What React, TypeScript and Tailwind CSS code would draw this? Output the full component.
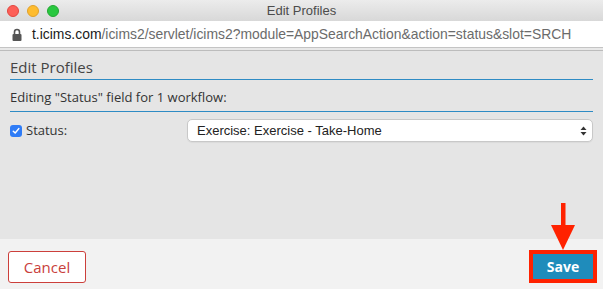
import React from "react";

export default function App() {
  return (
    <div className="relative flex h-[289px] w-[603px] flex-col overflow-hidden bg-[#e5e5e5]" style={{ fontFamily: '"Open Sans", sans-serif' }}>
      {/* Title bar */}
      <div className="grid h-[21px] grid-cols-[1fr_auto_1fr] items-center bg-gradient-to-b from-[#ececec] to-[#d8d8d8]">
        <div className="flex items-center gap-[8px] pl-[7px]">
          <span className="h-[12px] w-[12px] rounded-full border border-[#e2463f] bg-[#fd5f57]" />
          <span className="h-[12px] w-[12px] rounded-full border border-[#e1a12a] bg-[#febc2e]" />
          <span className="h-[12px] w-[12px] rounded-full border border-[#24a732] bg-[#29c840]" />
        </div>
        <div className="text-[13px] leading-none text-[#4c4c4c]" style={{ fontFamily: '"Liberation Sans", Arial, sans-serif' }}>
          Edit Profiles
        </div>
        <div />
      </div>
      {/* URL bar */}
      <div className="flex h-[26px] items-center gap-[10px] overflow-hidden whitespace-nowrap bg-white pl-[12px] text-[13.9px]" style={{ fontFamily: '"Liberation Sans", Arial, sans-serif' }}>
        <svg width="10" height="13" viewBox="0 0 10 13" className="shrink-0">
          <path d="M2.5 6V4a2.5 2.5 0 0 1 5 0v2" fill="none" stroke="#555" strokeWidth="1.6" />
          <rect x="0.5" y="6" width="9" height="7" rx="1" fill="#555" />
        </svg>
        <span className="text-[#1a1a1a]">
          t.icims.com<span className="text-[#6b6b6b]">/icims2/servlet/icims2?module=AppSearchAction&amp;action=status&amp;slot=SRCH</span>
        </span>
      </div>
      <div className="h-[1px] bg-[#c4c4c4]" />
      <div className="h-[2px] bg-[#e8e8e8]" />
      <div className="h-[1px] bg-[#bcbcbc]" />

      {/* Content */}
      <div className="flex-1 pl-[10px] pr-[10px]">
        <div className="border-b border-[#2e8bc4] pb-[2px] pt-[6px] text-[15px] leading-[20px] text-[#444]">Edit Profiles</div>
        <div className="border-b border-[#2e8bc4] pb-[4px] pt-[7px] text-[13px] leading-[20px] text-[#333]">
          Editing "Status" field for 1 workflow:
        </div>
        <div className="mt-[7px] flex items-center">
          <div className="flex w-[177px] items-center gap-[4px]">
            <span className="flex h-[12px] w-[12px] items-center justify-center rounded-[3px] bg-[#2f7cf6]">
              <svg width="8" height="8" viewBox="0 0 8 8">
                <path d="M1.3 4.2 3.2 6 6.8 1.6" fill="none" stroke="white" strokeWidth="1.5" strokeLinecap="round" strokeLinejoin="round" />
              </svg>
            </span>
            <span className="text-[13px] leading-none text-[#333]">Status:</span>
          </div>
          <div className="flex h-[23px] flex-1 items-center justify-between rounded-[5px] border border-[#c8c8c8] bg-white pl-[9px] pr-[5px] text-[13px] text-[#222] shadow-[0_1px_1px_rgba(0,0,0,0.05)]" style={{ fontFamily: '"Liberation Sans", Arial, sans-serif' }}>
            <span>Exercise: Exercise - Take-Home</span>
            <svg width="7" height="10" viewBox="0 0 7 10">
              <path d="M3.5 0.5 6.5 4H0.5Z" fill="#333" />
              <path d="M3.5 9.5 6.5 6H0.5Z" fill="#333" />
            </svg>
          </div>
        </div>
      </div>

      {/* Footer */}
      <div className="flex h-[50px] items-start justify-between bg-[#f2f2f2] pl-[8px] pr-[6px]">
        <button className="mt-[12px] flex h-[32px] w-[78px] items-center justify-center rounded-[3px] border border-[#cc3f3b] bg-white text-[15px] text-[#c9403c]">
          Cancel
        </button>
        <div className="mt-[11px] border-[4px] border-[#ff2200]">
          <button className="flex h-[25px] w-[60px] items-center justify-center bg-[#1f8cbb] text-[14px] font-bold text-white">Save</button>
        </div>
      </div>

      {/* Annotation arrow */}
      <svg className="absolute left-[550px] top-[203px]" width="26" height="48" viewBox="0 0 26 48">
        <rect x="11" y="0" width="4.5" height="24" fill="#ff2200" />
        <path d="M1 22 H25 L13 47 Z" fill="#ff2200" />
      </svg>
    </div>
  );
}
